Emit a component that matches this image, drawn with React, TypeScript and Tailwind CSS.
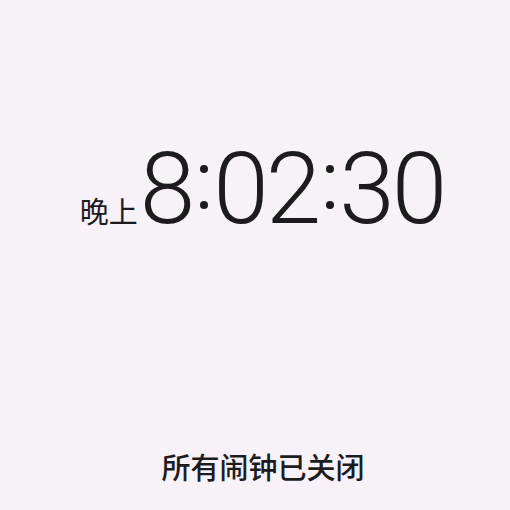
function Colon() {
  return (
    <span className="mb-[16px] ml-[3px] flex h-[72px] w-[18px] flex-col items-center justify-between self-end py-[14px]">
      <span className="block h-[8px] w-[8px] rounded-full bg-[#1c1b1f]" />
      <span className="block h-[8px] w-[8px] rounded-full bg-[#1c1b1f]" />
    </span>
  )
}

export default function App() {
  return (
    <div className="flex h-[510px] w-[510px] flex-col items-center bg-[#f7f2f7] text-[#1c1b1f] [font-family:Roboto,'Noto_Sans_CJK_SC',sans-serif]">
      <div className="mt-[139px] flex items-baseline pl-[14px]">
        <span className="mr-[2px] text-[29px] leading-none">晚上</span>
        <span className="text-[100px] font-light leading-none tracking-[-3px]">8</span>
        <Colon />
        <span className="text-[100px] font-light leading-none tracking-[-3px]">02</span>
        <Colon />
        <span className="text-[100px] font-light leading-none tracking-[-3px]">30</span>
      </div>
      <div className="mt-auto mb-[26px] pl-[16px] text-[29px] font-medium leading-none">所有闹钟已关闭</div>
    </div>
  )
}
